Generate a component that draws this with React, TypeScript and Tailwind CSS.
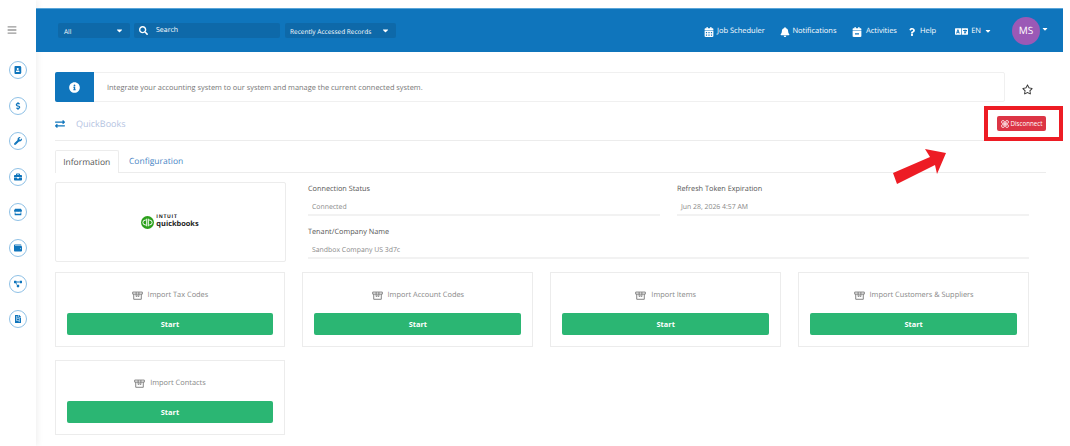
import {
  FaAddressBook,
  FaBell,
  FaBriefcase,
  FaCalendarAlt,
  FaCalendarMinus,
  FaDollarSign,
  FaExchangeAlt,
  FaFileInvoice,
  FaInfoCircle,
  FaLanguage,
  FaProjectDiagram,
  FaQuestion,
  FaRegStar,
  FaSearch,
  FaStore,
  FaWallet,
  FaWrench,
  FaBars,
  FaCaretDown,
} from "react-icons/fa";

const sideIcons = [
  FaAddressBook,
  FaDollarSign,
  FaWrench,
  FaBriefcase,
  FaStore,
  FaWallet,
  FaProjectDiagram,
  FaFileInvoice,
];

const Sidebar = () => (
  <aside className="w-[36px] shrink-0 pt-[25px] pl-[8.5px] bg-white shadow-[2px_0_6px_rgba(0,0,0,0.06)]">
    <FaBars className="text-[#999] text-[10px] ml-[-1.5px] mb-[26px]" />
    <div className="flex flex-col gap-[17.6px]">
      {sideIcons.map((Icon, i) => (
        <div
          key={i}
          className="w-[18px] h-[18px] rounded-full border border-[#8fc1e6] flex items-center justify-center text-[#0f75bc] text-[8px]"
        >
          <Icon />
        </div>
      ))}
    </div>
  </aside>
);

const NavItem = ({ icon, label, gap }: { icon: React.ReactNode; label: string; gap: string }) => (
  <div className={`flex items-center pt-[2px] text-[7.5px] text-white ${gap}`}>
    {icon}
    <span className="pt-[1px]">{label}</span>
  </div>
);

const BoxIcon = () => (
  <svg width="11" height="9" viewBox="0 0 16 13" fill="none" stroke="#777" strokeWidth="1.3">
    <path d="M1 1.500H15V4.500H1ZM2.500 4.500V12H13.500V4.500M6 1.500V8L8 7L10 8V1.500" />
  </svg>
);

const LinkIcon = () => (
  <svg width="8" height="8" viewBox="0 0 16 16" fill="none" stroke="#fff" strokeWidth="1.500">
    <circle cx="4" cy="4" r="3" />
    <circle cx="12" cy="4" r="3" />
    <circle cx="4" cy="12" r="3" />
    <circle cx="12" cy="12" r="3" />
    <path d="M5 5L11 11M11 5L5 11" />
  </svg>
);

const Header = () => (
  <header className="h-[44px] mr-[7px] bg-[#0f75bc] border-t border-[#5aa5d8] flex items-center pl-[22px] pr-[14px] text-white">
    <div className="w-[72px] h-[15px] bg-[#0e69a9] rounded-[2px] flex items-center justify-between px-[6px] text-[6.5px]">
      <span className="pt-[2px]">All</span>
      <FaCaretDown className="text-[9px]" />
    </div>
    <div className="w-[146px] h-[15px] ml-[4px] bg-[#0e69a9] rounded-[2px] flex items-center px-[5px] text-[7px]">
      <FaSearch className="text-[9px] mr-[8px]" />
      <span className="pt-[2px]">Search</span>
    </div>
    <div className="w-[111px] h-[15px] ml-[5px] bg-[#0e69a9] rounded-[2px] flex items-center justify-between pl-[5px] pr-[6px] text-[6.5px]">
      <span className="pt-[2px]">Recently Accessed Records</span>
      <FaCaretDown className="text-[9px]" />
    </div>
    <div className="ml-auto flex items-center">
      <NavItem gap="gap-[3px]" icon={<FaCalendarAlt className="text-[10px]" />} label="Job Scheduler" />
      <div className="w-[15.5px]" />
      <NavItem gap="gap-[2px]" icon={<FaBell className="text-[10px]" />} label="Notifications" />
      <div className="w-[15.5px]" />
      <NavItem gap="gap-[4px]" icon={<FaCalendarMinus className="text-[10px]" />} label="Activities" />
      <div className="w-[11px]" />
      <NavItem gap="gap-[4px]" icon={<FaQuestion className="text-[8px]" />} label="Help" />
      <div className="w-[19px]" />
      <NavItem gap="gap-[3px]" icon={<FaLanguage className="text-[13px]" />} label="EN" />
      <FaCaretDown className="text-[8px] ml-[3px] mt-[1px]" />
      <div className="w-[20px] h-0" />
      <div className="w-[28px] h-[28px] rounded-full bg-[#9b59b6] flex items-center justify-center text-[10px]">
        MS
      </div>
      <FaCaretDown className="text-[8px] ml-[1px] -mt-[4px]" />
    </div>
  </header>
);

const Field = ({ label, value }: { label: string; value: string }) => (
  <div className="flex-1">
    <div className="pt-[1px] text-[7.3px] leading-[12px] text-[#555]">{label}</div>
    <div className="mt-[7px] h-[14px] pl-[4px] text-[6.9px] leading-[12px] text-[#888] border-b-2 border-[#f2f2f2]">
      {value}
    </div>
  </div>
);

const ImportCard = ({ label }: { label: string }) => (
  <div className="h-[75px] border border-[#ececec] px-[11px] pt-[14px]">
    <div className="h-[16px] flex items-center justify-center gap-[5px] text-[7.4px] text-[#888]">
      <BoxIcon />
      <span className="pt-[2px]">{label}</span>
    </div>
    <button className="mt-[10px] w-full h-[22px] pt-[2px] bg-[#2bb673] rounded-[2px] text-white text-[7.4px] font-bold">
      Start
    </button>
  </div>
);

const Logo = () => (
  <div className="flex items-center gap-[2px]">
    <svg width="13" height="13" viewBox="0 0 24 24">
      <circle cx="12" cy="12" r="12" fill="#2ca01c" />
      <path
        d="M9 7.500H8a4.500 4.500 0 0 0 0 9h1.500M10.500 5v14M15 16.500h1a4.500 4.500 0 0 0 0-9h-1.500M13.500 19V5"
        stroke="#fff"
        strokeWidth="1.800"
        fill="none"
      />
    </svg>
    <div className="flex flex-col text-[#222] font-bold">
      <span className="text-[5px] leading-[5px] tracking-[0.7px]">INTUIT</span>
      <span className="text-[7.4px] leading-[9px]">quickbooks</span>
    </div>
  </div>
);

export default function App() {
  return (
    <div className="relative w-[1070px] h-[446px] overflow-hidden bg-white flex font-['Open_Sans',sans-serif] [text-rendering:geometricPrecision]">
      <Sidebar />
      <div className="flex-1 pt-[8px]">
        <Header />
        <main className="pl-[18.5px] pr-[24px] pt-[20px]">
          <div className="flex items-center">
            <div className="w-[950.5px] h-[30px] flex items-center border border-[#f0f0f0] rounded-[2px]">
              <div className="w-[39px] h-[30px] -ml-px bg-[#0f75bc] rounded-l-[2px] flex items-center justify-center text-white text-[11px]">
                <FaInfoCircle />
              </div>
              <span className="ml-[13.5px] pt-[3px] text-[7.4px] text-[#777]">
                Integrate your accounting system to our system and manage the current connected system.
              </span>
            </div>
            <FaRegStar className="ml-[17px] mt-[5px] text-[11px] text-[#333]" />
          </div>

          <div className="h-[39px] pt-[5px] flex items-center border-b border-[#ececec]">
            <FaExchangeAlt className="text-[#0f75bc] text-[10px]" />
            <span className="ml-[11.5px] text-[9px] text-[#b4c3df]">QuickBooks</span>
            <button className="ml-auto w-[49px] h-[15px] bg-[#dc3545] rounded-[2px] flex items-center justify-center gap-[2px] text-white text-[6.2px]">
              <LinkIcon />
              <span className="pt-[1px]">Disconnect</span>
            </button>
          </div>

          <div className="mt-[9px] h-[23px] flex border-b border-[#ececec] text-[8.5px]">
            <div className="w-[64.5px] h-[23px] pt-[2px] bg-white border border-b-0 border-[#ececec] rounded-t-[2px] flex items-center justify-center text-[#555]">
              Information
            </div>
            <div className="ml-[10px] pt-[2px] flex items-center text-[#4a86c5]">Configuration</div>
          </div>

          <div className="mt-[9px] flex w-[974.5px]">
            <div className="w-[231px] h-[80px] border border-[#ececec] rounded-[2px] flex items-center justify-center">
              <Logo />
            </div>
            <div className="ml-[22.5px] flex-1">
              <div className="flex gap-[17px]">
                <Field label="Connection Status" value="Connected" />
                <Field label="Refresh Token Expiration" value="Jun 28, 2026 4:57 AM" />
              </div>
              <div className="mt-[9px]">
                <Field label="Tenant/Company Name" value="Sandbox Company US 3d7c" />
              </div>
            </div>
          </div>

          <div className="mt-[10px] grid grid-cols-4 gap-x-[17px] gap-y-[13px] w-[974.5px]">
            <ImportCard label="Import Tax Codes" />
            <ImportCard label="Import Account Codes" />
            <ImportCard label="Import Items" />
            <ImportCard label="Import Customers & Suppliers" />
            <ImportCard label="Import Contacts" />
          </div>
        </main>
      </div>

      {/* annotation drawn over the screenshot */}
      <div className="absolute left-[984px] top-[106px] w-[79px] h-[35px] border-[4px] border-[#ed1c24]" />
      <svg className="absolute left-[890px] top-[145px]" width="60" height="42" viewBox="0 0 60 42">
        <path d="M3 28L7 39L45 20L47 29L56 8L35 4L40 12Z" fill="#ed1c24" />
      </svg>
    </div>
  );
}
